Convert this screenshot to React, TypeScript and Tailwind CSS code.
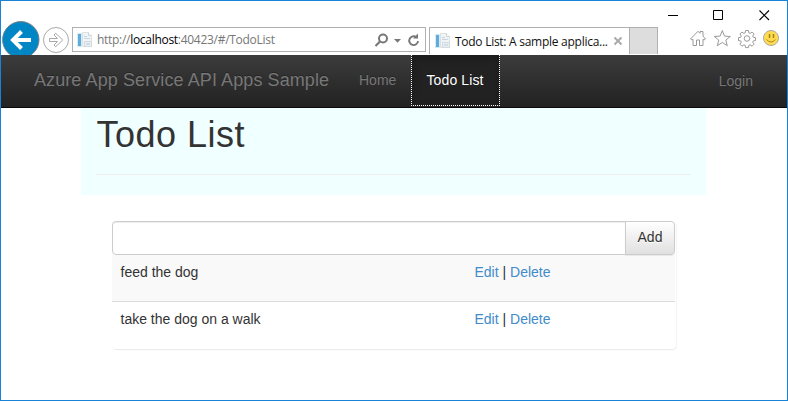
import React from "react";

function PageIcon() {
  return (
    <svg width="16" height="16" viewBox="0 0 16 16" className="block shrink-0">
      <path d="M5.5 .5h6l3 3v11h-9z" fill="#f1f4f6" stroke="#dde1e4" />
      <path d="M11.5 .5v3h3" fill="#fff" stroke="#cdd3d7" />
      <path d="M7 4.500h3M7 6.500h6M9 9.500h4M9 11.500h4" stroke="#c9d5de" />
      <rect x="0" y="1" width="5" height="14" fill="#d7ebf5" />
      <rect x="1" y="2" width="3" height="12" fill="#5fabda" />
      <path d="M7.500 9.500h7v5h-7z" fill="#e9eff3" stroke="#d3dbe1" />
      <path d="M9 12h4" stroke="#bccbd7" />
    </svg>
  );
}

function WindowControls() {
  return (
    <div className="flex h-[26px] shrink-0 justify-end pr-[17px] pt-[9px]">
      <svg width="102" height="11" viewBox="0 0 102 11" className="block" fill="none" stroke="#000">
        <path d="M0 5.500h10" />
        <path d="M45.500 .5h9v9h-9z" />
        <path d="M91.500 .5l9.500 9.500M101 .5l-9.500 9.500" strokeWidth="1.100" />
      </svg>
    </div>
  );
}

function NavButtons() {
  return (
    <svg width="71" height="35" viewBox="1 19 71 35" className="-mt-[7px] block shrink-0">
      <circle cx="20.800" cy="38.800" r="18.200" fill="#0086c4" stroke="#777f84" strokeWidth="1" />
      <path d="M31 39H13M21.500 30.500L13 39l8.500 8.500" fill="none" stroke="#fff" strokeWidth="4" />
      <circle cx="56" cy="39" r="12.500" fill="#fff" stroke="#ababab" />
      <path
        d="M49.500 37.500h8l-3.500-3.500 1.700-1.700 7 6.700-7 6.700-1.700-1.700 3.500-3.500h-8z"
        fill="#fff"
        stroke="#a8a8a8"
      />
    </svg>
  );
}

function ToolIcons() {
  return (
    <svg width="92" height="20" viewBox="689 29 92 20" className="ml-[31px] mt-[2px] block" fill="none" stroke="#9a9a9a" strokeWidth="1" strokeLinejoin="round">
      <path d="M690.500 39l7.500-7.700 2 2v-1.800h3v4.600l2.500 2.900-1.500 1-1-.7v6.200h-3.500v-5.500h-3v5.500H693v-6.200l-1 .7z" />
      <path d="M722.300 30.500l2.200 5.600 5.800.4-4.500 3.600 1.500 5.600-5-3.200-5 3.200 1.500-5.600-4.500-3.600 5.800-.4z" />
      <path d="M745.600 30.500h2.800l.4 2.300 1.300.6 2-1.400 2 2-1.400 2 .6 1.300 2.200.4v2.800l-2.200.4-.6 1.300 1.400 2-2 2-2-1.400-1.300.6-.4 2.200h-2.800l-.4-2.200-1.300-.6-2 1.400-2-2 1.400-2-.6-1.300-2.200-.4v-2.800l2.200-.4.6-1.300-1.400-2 2-2 2 1.400 1.300-.6z" />
      <circle cx="747" cy="38.500" r="2.800" />
      <circle cx="771" cy="38" r="7.500" fill="#ffdb4d" stroke="#a9a9a9" />
      <path d="M769.500 34v4M773.500 34v4" stroke="#9c8328" strokeWidth="1.500" />
      <path d="M766.500 39.500q4.500 5 9 0" stroke="#a98820" />
    </svg>
  );
}

function BrowserBar() {
  return (
    <div className="flex h-[28px] shrink-0 font-['Open_Sans','Noto_Sans',sans-serif] text-[12px]">
      <NavButtons />
      <div className="flex h-[25px] w-[354px] shrink-0 items-center border border-[#b0b0b0] bg-white pl-[4px]">
        <PageIcon />
        <span className="ml-[4px] w-[178px] whitespace-nowrap tracking-[-0.29px] text-[#777]">
          http://<span className="text-black">localhost</span>:40423/#/TodoList
        </span>
        <svg width="46" height="16" viewBox="374 31 46 16" className="ml-[99px] block" fill="none" stroke="#777">
          <circle cx="383" cy="37.500" r="4" strokeWidth="2" />
          <path d="M380 40.500l-4.500 4.500" strokeWidth="2.200" />
          <path d="M394 38h7l-3.500 3.700z" fill="#777" stroke="none" />
          <path d="M416.300 36.200a4.400 4.400 0 1 0 1.700 3.800" strokeWidth="1.900" />
          <path d="M413 37.500h5v-5z" fill="#777" stroke="none" />
        </svg>
      </div>
      <div className="ml-[3px] flex h-[27px] w-[200px] shrink-0 items-center border-l border-t border-[#b0b0b0] pl-[5px]">
        <PageIcon />
        <span className="ml-[4px] w-[153px] whitespace-nowrap pt-[2px] tracking-[-0.27px] text-[#111]">
          Todo List: A sample applica...
        </span>
        <svg width="10" height="10" viewBox="0 0 10 10" className="ml-[5px] block" stroke="#aaa" strokeWidth="2">
          <path d="M1.500 1.500l7 7M8.500 1.500l-7 7" />
        </svg>
      </div>
      <div className="h-[27px] w-[29px] shrink-0 border border-b-0 border-[#b0b0b0] bg-[#ddd]" />
      <ToolIcons />
    </div>
  );
}

function Navbar() {
  return (
    <nav className="flex h-[53px] shrink-0 border-b border-[#080808] bg-linear-to-b from-[#3c3c3c] to-[#222] pl-[33px] pr-[34px] text-[14px] leading-[20px] text-[#777] [text-shadow:0_-1px_0_rgba(0,0,0,.25)]">
      <a className="w-[310px] whitespace-nowrap pt-[15px] text-[18px] tracking-[0.09px]">
        Azure App Service API Apps Sample
      </a>
      <a className="w-[67px] pl-[15px] pt-[15px]">Home</a>
      <a className="h-[51px] w-[89px] border border-t-0 border-dotted border-white bg-[#222] pl-[14.500px] pt-[15px] tracking-[0.12px] text-white shadow-[inset_0_3px_9px_rgba(0,0,0,.25)]">
        Todo List
      </a>
      <a className="ml-auto pt-[16px]">Login</a>
    </nav>
  );
}

function TodoRow({ text, striped }: { text: string; striped?: boolean }) {
  return (
    <div
      className={
        striped
          ? "flex h-[46px] bg-[#f9f9f9] pl-[8.500px] pt-[7px]"
          : "flex h-[48px] border-t border-[#ddd] pl-[8.500px] pt-[7px]"
      }
    >
      <span className="w-[354px]">{text}</span>
      <span>
        <a className="text-[#428bca]">Edit</a> | <a className="text-[#428bca]">Delete</a>
      </span>
    </div>
  );
}

export default function App() {
  return (
    <div className="flex h-[401px] w-[788px] flex-col overflow-hidden border border-[#1883d7] bg-white font-['Liberation_Sans',Arial,sans-serif] text-[14px] leading-[20px] text-[#333]">
      <WindowControls />
      <BrowserBar />
      <Navbar />
      <header className="ml-[80px] h-[87px] w-[625px] shrink-0 bg-[#f0ffff] px-[15px]">
        <h1 className="h-[67px] border-b border-[#eee] pl-[0.500px] pt-[7px] text-[36px] leading-[40px] tracking-[0.5px]">
          Todo List
        </h1>
      </header>
      <main className="ml-[111px] mt-[26px] w-[564px] rounded-[4px] shadow-[0_1px_1px_rgba(0,0,0,.05),1px_1px_1px_rgba(0,0,0,.04)]">
        <div className="flex h-[34px] w-[563px]">
          <input
            className="h-[34px] w-[514px] rounded-l-[4px] border border-[#ccc] bg-white px-3 shadow-[inset_0_1px_1px_rgba(0,0,0,.075)] outline-none"
            aria-label="New item"
          />
          <button className="-ml-px h-[34px] w-[50px] rounded-r-[4px] border border-[#ccc] bg-linear-to-b from-white to-[#e0e0e0] pb-[2px] shadow-[inset_0_1px_0_rgba(255,255,255,.15),0_1px_1px_rgba(0,0,0,.075)] [text-shadow:0_1px_0_#fff]">
            Add
          </button>
        </div>
        <div className="w-[563px]">
          <TodoRow text="feed the dog" striped />
          <TodoRow text="take the dog on a walk" />
        </div>
      </main>
    </div>
  );
}
